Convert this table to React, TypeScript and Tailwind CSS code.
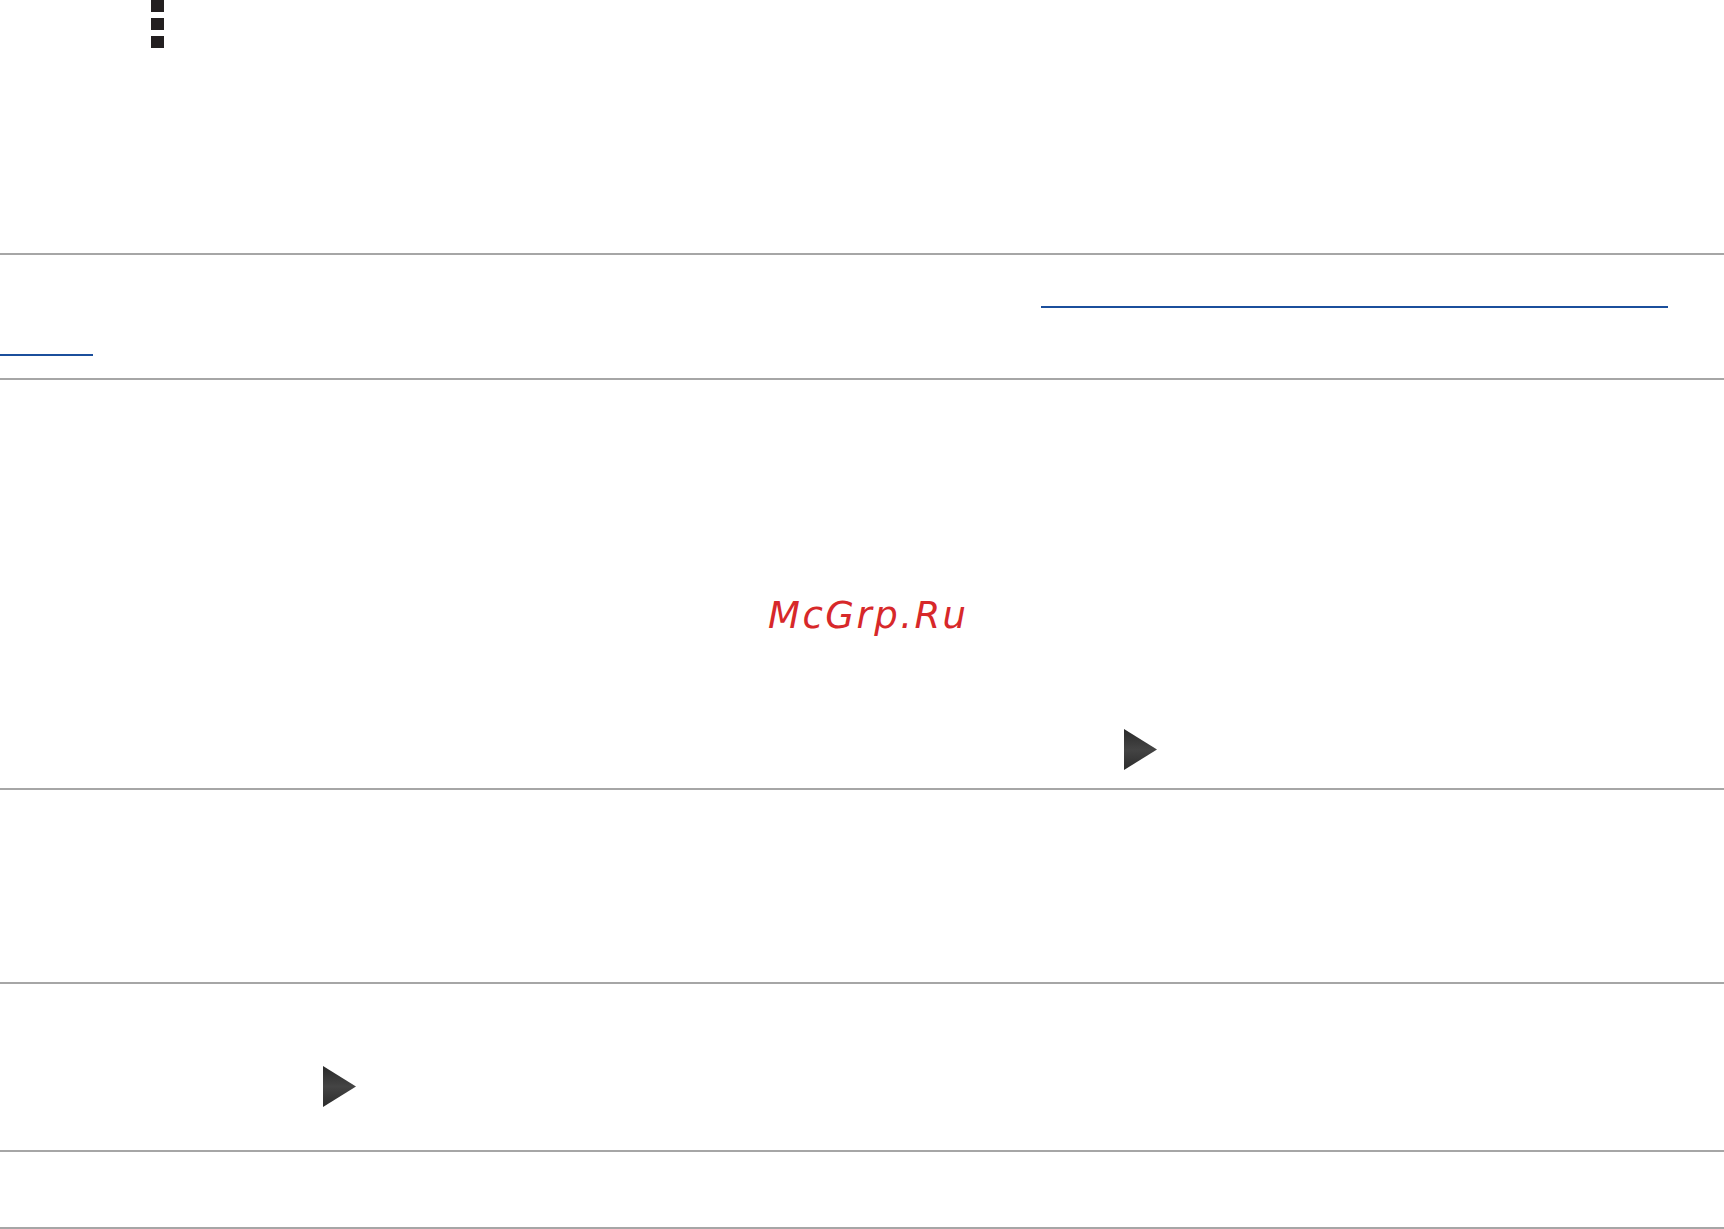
import React from "react"

function Dots() {
  return (
    <div className="ml-[151px] flex w-[13px] flex-col gap-[6px]">
      <div className="h-[12px] w-[13px] bg-[#231f20]" />
      <div className="h-[12px] w-[13px] bg-[#231f20]" />
      <div className="h-[12px] w-[13px] bg-[#231f20]" />
    </div>
  )
}

function Play({ id }: { id: string }) {
  return (
    <svg width="34" height="41" viewBox="0 0 34 41" className="block">
      <defs>
        <linearGradient id={id} x1="0" y1="0" x2="0" y2="1">
          <stop offset="0" stopColor="#2a2a2a" />
          <stop offset="0.5" stopColor="#444444" />
          <stop offset="1" stopColor="#2c2c2c" />
        </linearGradient>
      </defs>
      <polygon points="0,0 33,20.5 0,41" fill={`url(#${id})`} />
    </svg>
  )
}

const rule = "border-b-2 border-[#a6a6a6]"

export default function App() {
  return (
    <div className="w-[1724px] h-[1229px] overflow-hidden bg-white">
      <section className={`h-[255px] ${rule}`}>
        <Dots />
      </section>

      <section className={`h-[125px] pt-[51px] ${rule}`}>
        <div className="ml-[1041px] h-[2px] w-[627px] bg-[#1b4f9c]" />
        <div className="mt-[46px] h-[2px] w-[93px] bg-[#1b4f9c]" />
      </section>

      <section className={`h-[410px] pt-[215px] ${rule}`}>
        <p className="pl-[768px] text-[37px] leading-[42px] italic tracking-[2.5px] text-[#d7282a] font-['DejaVu_Sans',sans-serif]">
          McGrp.Ru
        </p>
        <div className="ml-[1124px] mt-[92px]">
          <Play id="playA" />
        </div>
      </section>

      <section className={`h-[194px] ${rule}`} />

      <section className={`h-[168px] pt-[82px] ${rule}`}>
        <div className="ml-[323px]">
          <Play id="playB" />
        </div>
      </section>

      <section className={`h-[77px] ${rule}`} />
    </div>
  )
}
